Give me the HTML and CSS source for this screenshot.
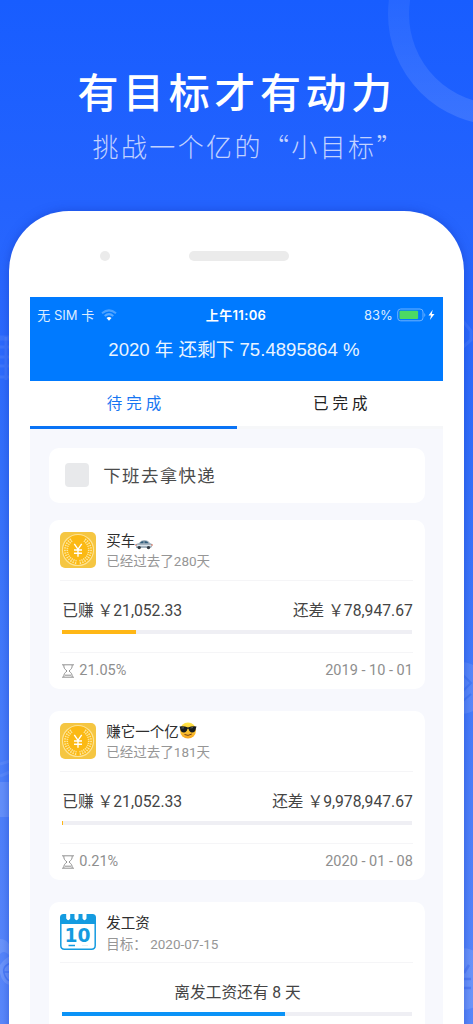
FILE: index.html
```html
<!DOCTYPE html>
<html lang="zh-CN">
<head>
<meta charset="utf-8">
<title>有目标才有动力</title>
<link rel="stylesheet" href="styles.css">
</head>
<body>
<svg width="0" height="0" class="defs" aria-hidden="true">
  <symbol id="coin" viewBox="0 0 36 36">
    <rect width="36" height="36" rx="5" fill="#f5c642"/>
    <circle cx="18" cy="18" r="15.5" fill="#fbb914" stroke="#fde394" stroke-width="1.2"/>
    <path d="M11.500 8A12 12 0 0 0 17 30M24.500 8A12 12 0 0 1 19 30" fill="none" stroke="#fde79e" stroke-width="4" stroke-dasharray="1.300 1"/>
    <path d="M11.500 8A12 12 0 0 0 17 30M24.500 8A12 12 0 0 1 19 30" fill="none" stroke="#fbb914" stroke-width=".7"/>
    <path d="M14.300 11.800L18 17.300L21.700 11.800M18 17.300V24.800M14 18H22M14 21.200H22" fill="none" stroke="#fff" stroke-width="1.400"/>
  </symbol>
  <symbol id="glass" viewBox="0 0 12 14">
    <path d="M0 .8H12M0 13.200H12M1.800 1C1.800 4.200 2.500 4.800 5 7C2.500 9.200 1.800 9.800 1.800 13M10.200 1C10.200 4.200 9.500 4.800 7 7C9.500 9.200 10.200 9.800 10.200 13M3 11.200H9" fill="none" stroke="#929292" stroke-width="1"/>
  </symbol>
</svg>
<main class="poster">
  <svg class="decor" width="473" height="1024" viewBox="0 0 473 1024" aria-hidden="true">
    <defs><linearGradient id="ring" x1="0" y1="0" x2="0" y2="1"><stop offset=".4" stop-color="#fff" stop-opacity=".06"/><stop offset="1" stop-color="#fff" stop-opacity=".12"/></linearGradient></defs>
    <circle cx="499" cy="14" r="100.500" fill="none" stroke="url(#ring)" stroke-width="21"/>
    <g fill="none" stroke="#fff" stroke-opacity=".08" stroke-width="3">
      <path d="M0 338H10" stroke-width="5"/><path d="M0 347H10M0 357H10M0 366H10M0 377H10M6 337V380" />
      <path d="M463 321L471 331V340L463 347"/>
      <path d="M0 764L10 761M0 776L10 772"/>
    </g>
    <rect y="782" width="12" height="35" fill="#fff" fill-opacity=".13"/>
    <path d="M0 939Q10 939 12 954V986Q2 984 0 973V965Q4 959 10 956Q4 949 0 954Z" fill="#fff" fill-opacity=".13"/>
    <path d="M10 963Q2 967 4 973Q6 980 10 981M3 972H10" fill="none" stroke="#4c7cf7" stroke-width="1.500"/>
    <circle cx="461" cy="688" r="26" fill="#fff" fill-opacity=".11"/>
    <path d="M463 675L471 683L463 691M463 701L471 694" fill="none" stroke="#477af5" stroke-width="2"/>
    <circle cx="461" cy="979" r="31" fill="#fff" fill-opacity=".12"/>
    <path d="M469 965L464 973M461 979H471M461 988H471" fill="none" stroke="#557ff5" stroke-width="2.500"/>
  </svg>
  <h1 class="title">有目标才有动力</h1>
  <p class="subtitle">挑战一个亿的“小目标”</p>

  <section class="phone">
    <div class="sensors"><i class="camera"></i><i class="speaker"></i></div>
    <div class="screen">
      <header class="header">
        <div class="status">
          <div class="carrier"><span>无 SIM 卡</span>
            <svg width="16" height="12" viewBox="0 0 16 12"><g fill="none" stroke="#fff" stroke-width="2"><path d="M1 4.300Q8-1.500 15 4.300" opacity=".3"/><path d="M3.700 7Q8 3.300 12.300 7" opacity=".35"/></g><path d="M5.500 9Q8 7 10.500 9L8 11.700Z" fill="#fff"/></svg>
          </div>
          <span class="time">上午11:06</span>
          <div class="power"><span>83%</span>
            <svg width="38" height="14" viewBox="0 0 38 14"><rect x=".7" y="1" width="25.300" height="11.800" rx="3" fill="none" stroke="#6cb1ff" stroke-width="1"/><rect x="2.500" y="2.800" width="18.600" height="8.200" rx="1" fill="#4cd964"/><path d="M27.300 5Q29.400 6.900 27.300 9Z" fill="#6cb1ff"/><path d="M35.700 1.700L31.500 7.600H34L32.900 12L37.500 5.900H34.800Z" fill="#fff"/></svg>
          </div>
        </div>
        <div class="remaining">2020 年 还剩下 75.4895864 %</div>
      </header>
      <nav class="tabs"><a class="tab active">待完成</a><a class="tab">已完成</a></nav>
      <div class="list">
        <article class="card todo"><i class="check"></i><span class="task">下班去拿快递</span></article>

        <article class="card goal">
          <div class="top"><svg class="icon"><use href="#coin"/></svg>
            <div class="names"><div class="name">买车<svg class="car" width="18" height="11" viewBox="0 0 18 11"><path d="M1 5L4 4Q6 1 9 1Q13 1 15 4L17 5V8L15 9H1Z" fill="#a5b4c0"/><path d="M4.500 4.300Q6.500 2 8.500 2V4.300ZM9.500 2Q12.500 2 13.700 4.300H9.500Z" fill="#315d7b"/><path d="M1 6.500H17" stroke="#dbe5ed"/><circle cx="4.200" cy="8.600" r="1.700" fill="#343c43"/><circle cx="13.500" cy="8.600" r="1.700" fill="#343c43"/><path d="M1 5V7M17 5V7" stroke="#d36b53"/></svg></div><div class="sub">已经过去了280天</div></div>
          </div>
          <div class="money"><span>已赚 ￥21,052.33</span><span>还差 ￥78,947.67</span></div>
          <div class="track"><div class="fill" style="width:21.05%"></div></div>
          <div class="foot"><span class="percent"><svg width="12" height="14"><use href="#glass"/></svg>21.05%</span><span class="date">2019 - 10 - 01</span></div>
        </article>

        <article class="card goal">
          <div class="top"><svg class="icon"><use href="#coin"/></svg>
            <div class="names"><div class="name">赚它一个亿<svg class="cool" width="18" height="17" viewBox="0 0 18 17"><defs><linearGradient id="face" x2="0" y2="1"><stop stop-color="#ffe84a"/><stop offset="1" stop-color="#f7a51d"/></linearGradient></defs><circle cx="9" cy="8.500" r="8" fill="url(#face)"/><path d="M.5 4.500Q5 4 9 5.400Q13 4 17.500 4.500L17 6Q16.500 10.500 13 10.500Q10.500 10.500 9.500 6.700H8.500Q7.500 10.500 5 10.500Q1.500 10.500 1 6Z" fill="#171b1e"/><path d="M2.500 6L5 5.800M11.500 6L14 5.500" stroke="#73818b" stroke-width=".7"/><path d="M5.500 12.500Q9 14.500 12.800 12" fill="none" stroke="#744116"/></svg></div><div class="sub">已经过去了181天</div></div>
          </div>
          <div class="money"><span>已赚 ￥21,052.33</span><span>还差 ￥9,978,947.67</span></div>
          <div class="track"><div class="fill" style="width:.21%"></div></div>
          <div class="foot"><span class="percent"><svg width="12" height="14"><use href="#glass"/></svg>0.21%</span><span class="date">2020 - 01 - 08</span></div>
        </article>

        <article class="card goal">
          <div class="top"><svg class="icon" viewBox="0 0 36 36"><path d="M.8 8V31.500Q.8 35.200 4.500 35.200H31.500Q35.200 35.200 35.200 31.500V8" fill="#fff" stroke="#149be0" stroke-width="1.500"/><path d="M0 10V3.500Q0 0 3.500 0H6.200V4.500Q8.200 8 10.200 4.500V0H14.500V4.500Q16.500 8 18.500 4.500V0H22.500V4.500Q24.500 8 26.500 4.500V0H32.500Q36 0 36 3.500V10Z" fill="#149be0"/><text x="4.500" y="27.500" textLength="26" lengthAdjust="spacingAndGlyphs" class="day">10</text><path d="M8.500 31.500H15" stroke="#149be0" stroke-width="1.500"/><path d="M22 31.500H28" stroke="#e7f1f6"/></svg>
            <div class="names"><div class="name">发工资</div><div class="sub">目标<span class="colon">：</span> 2020-07-15</div></div>
          </div>
          <div class="money centered"><span>离发工资还有 8 天</span></div>
          <div class="track"><div class="fill blue" style="width:63.8%"></div></div>
        </article>
      </div>
    </div>
  </section>
</main>
</body>
</html>
```
FILE: styles.css
```css
* { box-sizing: border-box; }
body { margin: 0; }
.defs { position: absolute; }
.poster {
  position: relative;
  width: 473px;
  height: 1024px;
  overflow: hidden;
  background: linear-gradient(#185dff, #2463fe 20%, #3470fb 45%, #4e80fa 78%, #5b89fb);
  font-family: Roboto, "Noto Sans CJK SC", sans-serif;
  white-space: nowrap;
}
.decor { position: absolute; inset: 0; }
.title {
  margin: 0;
  padding: 60px 0 0 77.5px;
  font: 500 41px/60px "Noto Sans CJK SC", sans-serif;
  letter-spacing: 4.6px;
  color: #fff;
}
.subtitle {
  margin: 0;
  padding: 7px 0 0 92.5px;
  font: 300 26px/38px "Noto Sans CJK SC", sans-serif;
  letter-spacing: 2.4px;
  color: #c2d2ff;
}
.phone {
  position: relative;
  width: 455px;
  height: 900px;
  margin: 46px 0 0 9.3px;
  padding: 39px 21px 0 21px;
  border-radius: 60px 60px 0 0;
  background: #fff;
  box-shadow: 0 0 10px rgba(18, 58, 190, .5);
}
.sensors { display: flex; align-items: center; height: 47px; padding: 0 0 36px 69.500px; }
.camera { width: 10px; height: 10px; border-radius: 5px; background: #ebebeb; }
.speaker { width: 100px; height: 10px; margin-left: 79px; border-radius: 5px; background: #ebebeb; }
.screen { width: 412.500px; background: #f7f8fd; }
.header { height: 84px; background: #007aff; color: #fff; }
.status {
  display: grid;
  grid-template-columns: 1fr auto 1fr;
  align-items: center;
  height: 35px;
  padding: 0 8px 0 7px;
  font: 13px/20px Inter, "Noto Sans CJK SC", sans-serif;
}
.carrier, .power { display: flex; align-items: center; }
.carrier { gap: 7px; color: #dcecff; }
.power { justify-content: flex-end; gap: 4px; color: #dcecff; }
.time { font-weight: 600; letter-spacing: .35px; }
.remaining {
  padding-left: 78px;
  font: 18.6px/36px "Liberation Sans", "Noto Sans CJK SC", sans-serif;
  color: #eaf4ff;
}
.tabs { display: flex; height: 47.500px; background: #fff; }
.tab {
  flex: 1;
  padding-left: 5px;
  border-bottom: 3px solid #f6f7f9;
  text-align: center;
  font: 15.500px/43px "Noto Sans CJK SC", sans-serif;
  letter-spacing: 4px;
  color: #222;
}
.tab.active { border-color: #0a73f5; color: #1675f2; }
.list { display: flex; flex-direction: column; gap: 22.500px; padding: 19px 17.500px 0 19px; }
.card { border-radius: 10px; background: #fff; }
.todo {
  display: flex;
  align-items: center;
  gap: 14px;
  height: 55px;
  margin-bottom: -5px;
  padding-left: 15.500px;
  font-size: 17.500px;
  letter-spacing: 1.300px;
  color: #4b4b4b;
}
.task { padding-bottom: 2px; }
.check { width: 24.500px; height: 24.500px; border-radius: 4px; background: #e8e9eb; }
.goal { height: 168.500px; padding: 0 12px 0 11px; }
.top { display: flex; gap: 10.500px; height: 61px; padding-top: 12px; border-bottom: 1px solid #f5f5f7; }
.icon { width: 36px; height: 36px; margin-left: -.5px; }
.names { margin-top: -5px; }
.name { display: flex; align-items: center; height: 24px; font-size: 14.500px; color: #2e2e2e; }
.car { margin-top: 10px; }
.cool { margin-top: 1px; }
.sub { font-size: 13.500px; line-height: 21px; color: #969696; }
.colon { font-family: "Noto Sans CJK TC", sans-serif; }
.money { display: flex; justify-content: space-between; height: 49px; padding: 0 .5px 0 2px; font-size: 15.700px; line-height: 60px; color: #444; }
.centered { justify-content: center; }
.track { height: 4px; margin: 0 1px 0 1.500px; background: #efeff4; }
.fill { height: 4px; background: #ffb716; }
.fill.blue { background: #0b93f7; }
.foot {
  display: flex;
  align-items: center;
  justify-content: space-between;
  height: 36px;
  margin-top: 18px;
  padding: 0 .5px 0 2px;
  border-top: 1px solid #f5f5f7;
  font-size: 14.500px;
  color: #8e8e8e;
}
.percent { display: flex; align-items: center; gap: 5px; }
.day { font: bold 20px "DejaVu Sans", sans-serif; fill: #149be0; }
```
